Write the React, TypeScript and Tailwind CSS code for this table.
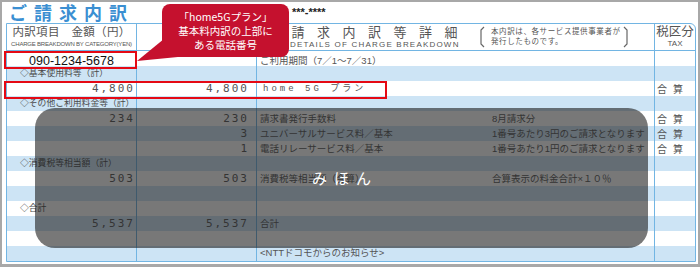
import React from "react"

type Row = {
  a?: string
  b?: string
  c?: string
  d?: string
  label?: string
  tax?: boolean
  phone?: boolean
  plan?: boolean
}

const rows: Row[] = [
  { phone: true, c: "ご利用期間（7／1～7／31）" },
  { label: "◇基本使用料等（計）" },
  { a: "4,800", b: "4,800", c: "home 5G プラン", plan: true, tax: true },
  { label: "◇その他ご利用料金等（計）" },
  { a: "234", b: "230", c: "請求書発行手数料", d: "8月請求分", tax: true },
  { b: "3", c: "ユニバーサルサービス料／基本", d: "1番号あたり3円のご請求となります", tax: true },
  { b: "1", c: "電話リレーサービス料／基本", d: "1番号あたり1円のご請求となります", tax: true },
  { label: "◇消費税等相当額（計）" },
  { a: "503", b: "503", c: "消費税等相当額（合算）", d: "合算表示の料金合計×１０％" },
  {},
  { label: "◇合計" },
  { a: "5,537", b: "5,537", c: "合計" },
  {},
  { c: "<NTTドコモからのお知らせ>" },
]

const line = "border-r border-[#72b5e3]"
const num = "flex items-center justify-end font-['DejaVu_Sans_Mono',monospace] text-[11px] tracking-[2px] text-[#555]"

function BillRow({ r, i }: { r: Row; i: number }) {
  const bg = i % 2 === 1 ? "bg-[#cde4f5]" : "bg-white"
  return (
    <div className={`grid h-[15px] grid-cols-[130px_120px_398px_40px] ${bg}`}>
      {r.label ? (
        <div className={`${line} flex items-center whitespace-nowrap pl-[13px] text-[8.8px] text-[#4a4a4a]`}>
          {r.label}
        </div>
      ) : r.phone ? (
        <div className={`${line} flex items-center justify-center pt-[1px] font-['Liberation_Sans'] text-[12.5px] text-[#111]`}>
          090-1234-5678
        </div>
      ) : (
        <div className={`${line} ${num} pr-[1px]`}>{r.a}</div>
      )}
      <div className={`${line} ${num} pr-[7px]`}>{r.b}</div>
      <div className={`${line} flex items-center whitespace-nowrap pl-[3px] text-[9.5px] text-[#555]`}>
        {r.plan ? (
          <span className="pl-[3px] font-['Liberation_Mono','Noto_Sans_CJK_JP',monospace] text-[9px] tracking-[3px]">
            {r.c}
          </span>
        ) : (
          <>
            <span className="w-[232px] shrink-0">{r.c}</span>
            <span>{r.d}</span>
          </>
        )}
      </div>
      <div className="flex items-center pl-[2px] text-[10px] tracking-[6px] text-[#555]">
        {r.tax ? "合算" : ""}
      </div>
    </div>
  )
}

export default function App() {
  return (
    <div className="relative h-[267px] w-[700px] overflow-hidden border-2 border-b-[3px] border-[#a8a8a8] bg-white font-['Liberation_Sans','Noto_Sans_CJK_JP',sans-serif]">
      {/* title */}
      <div className="flex h-[21px] items-center pl-[7px]">
        <span className="font-['Noto_Sans_CJK_JP',sans-serif] text-[18px] font-bold leading-[21px] tracking-[7px] text-[#3b8fd2]">
          ご請求内訳
        </span>
        <span className="ml-[158px] text-[11px] font-bold text-[#222]">***-****</span>
      </div>

      {/* table */}
      <div className="ml-[4px] w-[690px] overflow-hidden rounded-tr-[6px] border border-[#72b5e3]">
        <div className="grid h-[27px] grid-cols-[130px_120px_398px_40px] border-b border-[#72b5e3] text-[#555]">
          <div className={`${line} flex flex-col items-center pt-[1px]`}>
            <span className="text-[11.5px] leading-[14px] tracking-[0.3px]">内訳項目　金額（円）</span>
            <span className="text-[6px] leading-[10px] tracking-[-0.2px]">CHARGE BREAKDOWN BY CATEGORY(YEN)</span>
          </div>
          <div className={line} />
          <div className={`${line} flex items-center`}>
            <div className="flex w-[215px] flex-col pl-[9px] pt-[1px]">
              <span className="text-[13px] leading-[14px] tracking-[12.5px]">ご請求内訳等詳細</span>
              <span className="pl-[24px] text-[8px] leading-[10px] tracking-[1.2px]">DETAILS OF CHARGE BREAKDOWN</span>
            </div>
            <div className="ml-[6px] flex items-center">
              <svg width="8" height="22" viewBox="0 0 8 22" className="text-[#666]">
                <path d="M6 1 L3 4 L3 18 L6 21" fill="none" stroke="currentColor" strokeWidth="1.2" />
              </svg>
              <div className="flex w-[136px] flex-col pl-[5px] text-[7.5px] leading-[10px] tracking-[0.6px]">
                <span>本内訳は、各サービス提供事業者が</span>
                <span>発行したものです。</span>
              </div>
              <svg width="8" height="22" viewBox="0 0 8 22" className="text-[#666]">
                <path d="M2 1 L5 4 L5 18 L2 21" fill="none" stroke="currentColor" strokeWidth="1.2" />
              </svg>
            </div>
          </div>
          <div className="flex flex-col items-center pt-[1px]">
            <span className="text-[12.5px] leading-[14px]">税区分</span>
            <span className="text-[8px] leading-[10px]">TAX</span>
          </div>
        </div>
        {rows.map((r, i) => (
          <BillRow key={i} r={r} i={i} />
        ))}
      </div>

      {/* sample overlay */}
      <div className="absolute left-[33px] top-[106px] flex h-[140px] w-[613px] items-center justify-center rounded-[20px] bg-[#1e1e1e]/60">
        <span className="pl-[7px] font-['Noto_Sans_CJK_JP',sans-serif] text-[15px] tracking-[7px] text-white">みほん</span>
      </div>

      {/* red highlight boxes */}
      <div className="absolute left-[2px] top-[49px] h-[18px] w-[133px] border-2 border-[#e50914]" />
      <div className="absolute left-[2px] top-[79px] h-[18px] w-[383px] border-2 border-[#e50914]" />

      {/* callout */}
      <svg className="absolute left-0 top-0" width="300" height="70">
        <polygon points="168,32 186,54 135,59" fill="#c5112e" />
      </svg>
      <div className="absolute left-[160px] top-[2px] flex h-[53px] w-[127px] flex-col items-center justify-center rounded-[8px] bg-[#c5112e] font-['Noto_Sans_CJK_JP',sans-serif] text-[10.5px] leading-[14px] text-white">
        <span>「home5Gプラン」</span>
        <span>基本料内訳の上部に</span>
        <span>ある電話番号</span>
      </div>
    </div>
  )
}
